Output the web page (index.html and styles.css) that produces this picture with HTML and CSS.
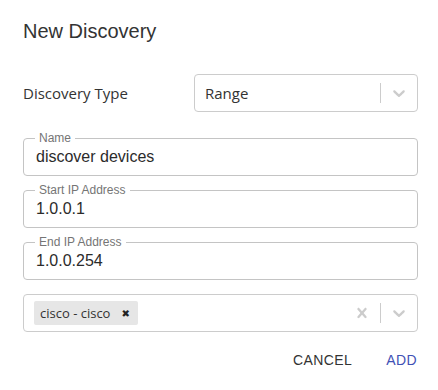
FILE: index.html
```html
<!DOCTYPE html>
<html lang="en">
<head>
  <meta charset="UTF-8">
  <title>New Discovery</title>
  <link rel="stylesheet" href="styles.css">
</head>
<body>
  <div class="dialog">
    <h2 class="title">New Discovery</h2>

    <div class="type-row">
      <label class="type-label">Discovery Type</label>
      <div class="select">
        <span class="select-value">Range</span>
        <span class="sep"></span>
        <span class="indicator">
          <svg width="20" height="20" viewBox="0 0 20 20"><path d="M4.516 7.548c0.436-0.446 1.043-0.481 1.576 0l3.908 3.747 3.908-3.747c0.533-0.481 1.141-0.446 1.574 0 0.436 0.445 0.408 1.197 0 1.615-0.406 0.418-4.695 4.502-4.695 4.502-0.217 0.223-0.502 0.335-0.787 0.335s-0.57-0.112-0.789-0.335c0 0-4.287-4.084-4.695-4.502s-0.436-1.170 0-1.615z" fill="#ccc"/></svg>
        </span>
      </div>
    </div>

    <fieldset class="field">
      <legend>Name</legend>
      <div class="field-value">discover devices</div>
    </fieldset>
    <fieldset class="field">
      <legend>Start IP Address</legend>
      <div class="field-value">1.0.0.1</div>
    </fieldset>
    <fieldset class="field">
      <legend>End IP Address</legend>
      <div class="field-value">1.0.0.254</div>
    </fieldset>

    <div class="select multi">
      <span class="chip">cisco - cisco<span class="chip-x">&#x2716;</span></span>
      <span class="spacer"></span>
      <span class="indicator">
        <svg width="20" height="20" viewBox="0 0 20 20"><path d="M14.348 14.849c-0.469 0.469-1.229 0.469-1.697 0l-2.651-3.030-2.651 3.029c-0.469 0.469-1.229 0.469-1.697 0-0.469-0.469-0.469-1.229 0-1.697l2.758-3.150-2.759-3.152c-0.469-0.469-0.469-1.228 0-1.697s1.228-0.469 1.697 0l2.652 3.031 2.651-3.031c0.469-0.469 1.228-0.469 1.697 0s0.469 1.229 0 1.697l-2.758 3.152 2.758 3.150c0.469 0.469 0.469 1.229 0 1.698z" fill="#ccc"/></svg>
      </span>
      <span class="sep"></span>
      <span class="indicator">
        <svg width="20" height="20" viewBox="0 0 20 20"><path d="M4.516 7.548c0.436-0.446 1.043-0.481 1.576 0l3.908 3.747 3.908-3.747c0.533-0.481 1.141-0.446 1.574 0 0.436 0.445 0.408 1.197 0 1.615-0.406 0.418-4.695 4.502-4.695 4.502-0.217 0.223-0.502 0.335-0.787 0.335s-0.57-0.112-0.789-0.335c0 0-4.287-4.084-4.695-4.502s-0.436-1.170 0-1.615z" fill="#ccc"/></svg>
      </span>
    </div>

    <div class="actions">
      <button class="btn">CANCEL</button>
      <button class="btn primary">ADD</button>
    </div>
  </div>
</body>
</html>
```

FILE: styles.css
```css
body {
  margin: 0;
  background: #fff;
  font-family: "Liberation Sans", Arial, sans-serif;
  color: #333;
}

.dialog {
  padding: 19px 20px 0 23px;
}

.title {
  margin: 0 0 31px;
  font-size: 20px;
  font-weight: 400;
  line-height: 24px;
  color: #333;
}

.type-row {
  display: flex;
  align-items: center;
  margin-bottom: 20px;
}

.type-label {
  width: 171px;
  font-family: "Open Sans", sans-serif;
  font-size: 15px;
  color: #333;
}

.select {
  flex: 1;
  display: flex;
  align-items: center;
  height: 36px;
  border: 1px solid #ccc;
  border-radius: 4px;
  padding-left: 10px;
}

.select-value {
  flex: 1;
  font-family: "Open Sans", sans-serif;
  font-size: 15px;
  color: #333;
}

.sep {
  width: 1px;
  height: 20px;
  background: #ccc;
}

.indicator {
  display: flex;
  padding: 8px;
}

/* outlined text fields */
.field {
  margin: 0 0 8px;
  padding: 0 12px 9px;
  border: 1px solid #c4c4c4;
  border-radius: 4px;
  min-width: 0;
}

.field legend {
  margin-left: -1px;
  padding: 0 4px;
  font-size: 12px;
  line-height: 12px;
  color: #757575;
}

.field-value {
  padding-top: 3px;
  font-size: 16px;
  line-height: 19px;
  color: #2b2b2b;
}

.multi {
  margin-top: 14px;
  padding-left: 10px;
}

.chip {
  display: inline-flex;
  align-items: center;
  height: 24px;
  padding: 0 8px 0 6px;
  background: #e6e6e6;
  border-radius: 2px;
  font-family: "Open Sans", sans-serif;
  font-size: 13px;
  color: #333;
}

.chip-x {
  margin-left: 11px;
  font-family: "DejaVu Sans", sans-serif;
  font-size: 10px;
  color: #222;
}

.spacer {
  flex: 1;
}

.actions {
  display: flex;
  justify-content: flex-end;
  margin-top: 18px;
}

.btn {
  background: none;
  border: none;
  padding: 0;
  font-family: "Liberation Sans", Arial, sans-serif;
  font-size: 14px;
  line-height: 20px;
  letter-spacing: 0.02857em;
  color: #333;
  cursor: pointer;
}

.btn.primary {
  margin-left: 34px;
  margin-right: 1px;
  color: #3f51b5;
}
```
